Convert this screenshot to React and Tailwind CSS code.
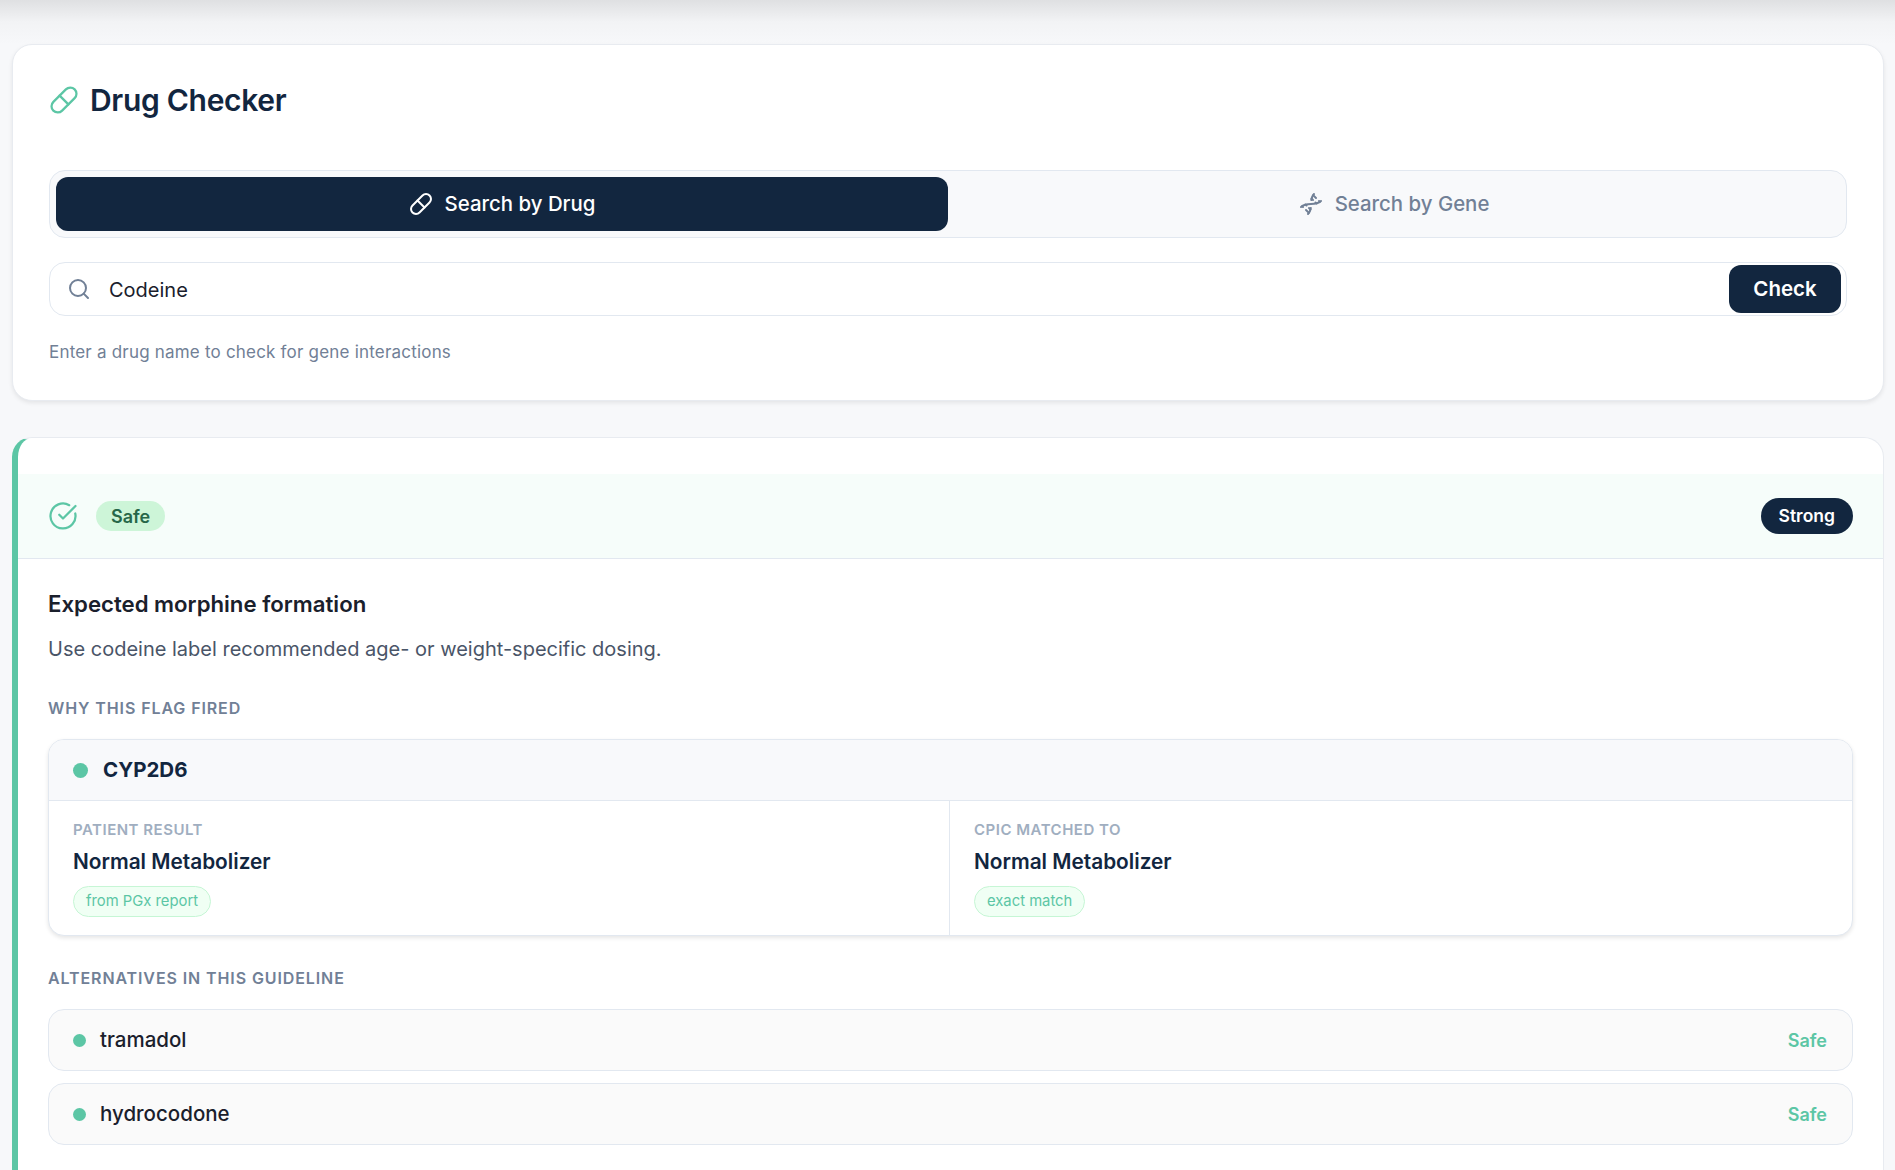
import { CircleCheckBig, Dna, Pill, Search } from "lucide-react";

const sans = "font-['Inter','Liberation_Sans',sans-serif]";

function GeneResult({ label, value, tag, className }) {
	return (
		<div className={`pl-6 pt-[19px] pb-[18px] ${className}`}>
			<div className="text-[15px] leading-5 font-semibold tracking-[0.5px] uppercase text-[#a0aec0]">{label}</div>
			<div className="mt-[8px] text-[20.8px] leading-[28px] font-semibold text-[#12263f]">{value}</div>
			<span className="inline-flex items-center h-[31px] mt-[10px] px-3 rounded-full border border-[#c6f6d5] bg-[#f0fff4] text-[14.8px] text-[#5cc6a5]">
				{tag}
			</span>
		</div>
	);
}

function AlternativeRow({ name }) {
	return (
		<div className="flex items-center justify-between h-[62px] pl-6 pr-[25px] rounded-2xl border border-[#e2e8f0] bg-[#fafafa]">
			<div className="flex items-center gap-[14px]">
				<span className="w-[13px] h-[13px] rounded-full bg-[#5cc6a5]"></span>
				<span className="text-[20.5px] font-medium text-[#1a202c]">{name}</span>
			</div>
			<span className="text-[18px] font-semibold text-[#5cc6a5]">Safe</span>
		</div>
	);
}

export default function App() {
	return (
		<div className={`h-[1170px] overflow-hidden bg-[#f7f8fa] ${sans}`}>
			<div className="h-[44px] bg-gradient-to-b from-[#dfe0e2] via-[#f2f3f5] to-[#f7f8fa]"></div>

			<div className="ml-3 mr-[11px] h-[357px] pt-[36px] px-9 rounded-[20px] border border-[#e8ebf0] bg-white shadow-[0_2px_4px_rgba(0,0,0,0.08)]">
				<div className="flex items-center gap-[11px] h-[38px]">
					<Pill className="w-[30px] h-[30px] text-[#5cc6a5]" strokeWidth={1.8} />
					<h1 className="text-[30px] font-semibold tracking-[-0.3px] text-[#12263f]">Drug Checker</h1>
				</div>

				<div className="flex mt-[51px] h-[68px] p-[6px] rounded-2xl border border-[#e2e8f0] bg-[#f8f9fb]">
					<button className="flex-1 flex items-center justify-center gap-[12px] rounded-xl bg-[#12263f] text-[20.4px] font-medium text-white">
						<Pill className="w-6 h-6" />
						Search by Drug
					</button>
					<button className="flex-1 flex items-center justify-center gap-[12px] rounded-xl text-[20.4px] font-medium text-[#718096]">
						<Dna className="w-6 h-6" />
						Search by Gene
					</button>
				</div>

				<div className="flex items-center mt-6 h-[54px] pl-[17px] pr-[5px] rounded-2xl border border-[#e2e8f0] bg-white">
					<Search className="w-6 h-6 text-[#718096]" />
					<span className="flex-1 ml-[18px] text-[20px] text-[#1a202c] pt-[1px]">Codeine</span>
					<button className="w-[112px] h-[48px] rounded-xl bg-[#12263f] text-[20.5px] font-semibold text-white">Check</button>
				</div>

				<p className="mt-6 text-[17px] leading-6 tracking-[0.2px] text-[#718096]">Enter a drug name to check for gene interactions</p>
			</div>

			<div className="ml-3 mr-[11px] mt-[36px] h-[900px] pt-[36px] rounded-[20px] border border-[#e8ebf0] border-l-[6px] border-l-[#5cc6a5] bg-white">
				<div className="flex items-center justify-between h-[85px] pl-[30px] pr-[30px] border-b border-[#e2e8f0] bg-[#f6fdfa]">
					<div className="flex items-center gap-[18px]">
						<CircleCheckBig className="w-[30px] h-[30px] text-[#5cc6a5]" strokeWidth={1.8} />
						<span className="inline-flex items-center h-[30px] px-[15px] rounded-full bg-[#cdf5d8] text-[18px] font-semibold text-[#276749]">Safe</span>
					</div>
					<span className="inline-flex items-center h-[36px] px-[18px] rounded-full bg-[#12263f] text-[17.5px] font-semibold text-white">Strong</span>
				</div>

				<div className="pl-[30px] pr-[30px]">
					<h2 className="mt-[30px] text-[22.2px] leading-[30px] font-semibold text-[#1a202c]">Expected morphine formation</h2>
					<p className="mt-[15px] text-[20px] leading-[30px] text-[#4a5568]">Use codeine label recommended age- or weight-specific dosing.</p>

					<div className="mt-[32px] text-[16px] leading-6 font-semibold tracking-[0.9px] uppercase text-[#718096]">Why this flag fired</div>

					<div className="mt-[19px] rounded-2xl border border-[#e2e8f0] bg-white overflow-hidden shadow-[0_2px_4px_rgba(0,0,0,0.1)]">
						<div className="flex items-center gap-[15px] h-[61px] pl-6 border-b border-[#e2e8f0] bg-[#f8f9fb]">
							<span className="w-[15px] h-[15px] rounded-full bg-[#5cc6a5]"></span>
							<span className="text-[20.5px] font-bold text-[#12263f]">CYP2D6</span>
						</div>
						<div className="flex">
							<GeneResult label="Patient result" value="Normal Metabolizer" tag="from PGx report" className="w-[901px] border-r border-[#e2e8f0]" />
							<GeneResult label="CPIC matched to" value="Normal Metabolizer" tag="exact match" className="flex-1" />
						</div>
					</div>

					<div className="mt-[30px] text-[16px] leading-6 font-semibold tracking-[0.9px] uppercase text-[#718096]">Alternatives in this guideline</div>

					<div className="flex flex-col gap-3 mt-[19px]">
						<AlternativeRow name="tramadol" />
						<AlternativeRow name="hydrocodone" />
					</div>
				</div>
			</div>
		</div>
	);
}
